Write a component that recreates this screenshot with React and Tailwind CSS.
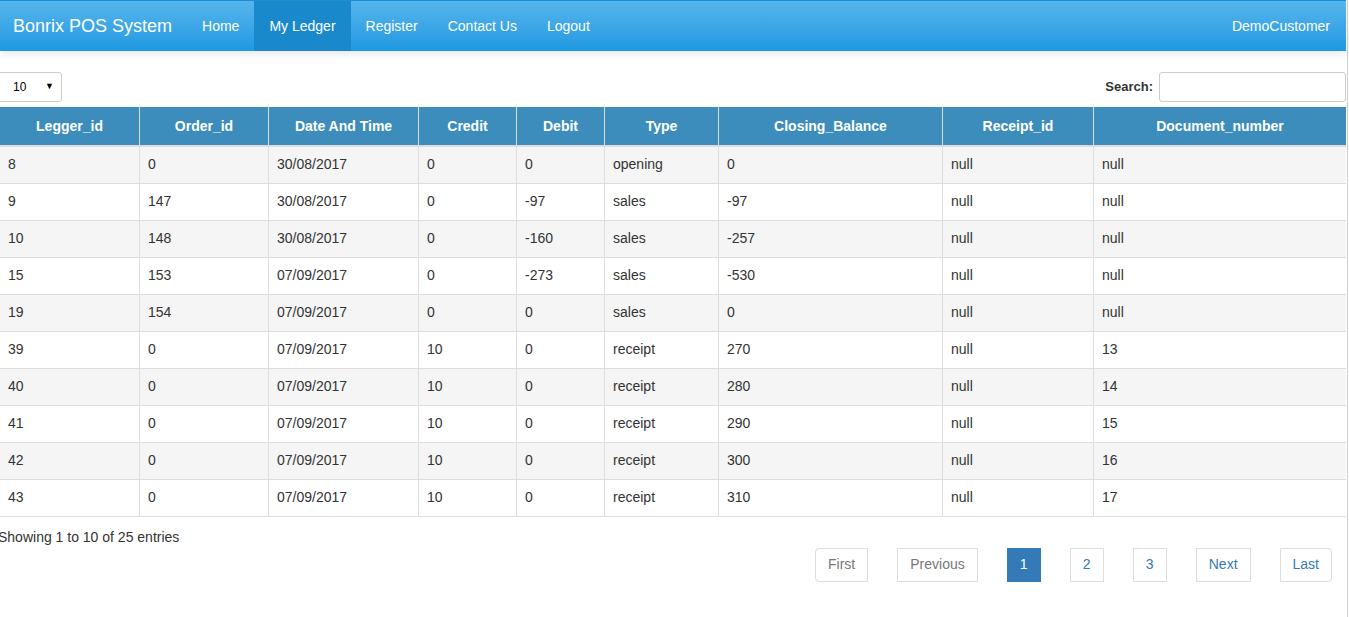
import React from "react";

const cols = [
  { name: "Legger_id", w: 140 },
  { name: "Order_id", w: 129 },
  { name: "Date And Time", w: 150 },
  { name: "Credit", w: 98 },
  { name: "Debit", w: 88 },
  { name: "Type", w: 114 },
  { name: "Closing_Balance", w: 224 },
  { name: "Receipt_id", w: 151 },
  { name: "Document_number", w: 253 },
];

const rows = [
  ["8", "0", "30/08/2017", "0", "0", "opening", "0", "null", "null"],
  ["9", "147", "30/08/2017", "0", "-97", "sales", "-97", "null", "null"],
  ["10", "148", "30/08/2017", "0", "-160", "sales", "-257", "null", "null"],
  ["15", "153", "07/09/2017", "0", "-273", "sales", "-530", "null", "null"],
  ["19", "154", "07/09/2017", "0", "0", "sales", "0", "null", "null"],
  ["39", "0", "07/09/2017", "10", "0", "receipt", "270", "null", "13"],
  ["40", "0", "07/09/2017", "10", "0", "receipt", "280", "null", "14"],
  ["41", "0", "07/09/2017", "10", "0", "receipt", "290", "null", "15"],
  ["42", "0", "07/09/2017", "10", "0", "receipt", "300", "null", "16"],
  ["43", "0", "07/09/2017", "10", "0", "receipt", "310", "null", "17"],
];

export default function App() {
  return (
    <div className="w-[1349px] h-[617px] overflow-hidden flex bg-white font-['Liberation_Sans',Arial,sans-serif] text-[14px] text-[#333]">
      <div className="w-[1346px] shrink-0 flex flex-col">
        {/* Navbar */}
        <div className="relative h-[51px] border-t border-[#1a8fd6] bg-gradient-to-b from-[#55b5ec] to-[#1c99e1] flex items-stretch justify-between shadow-[0_4px_6px_rgba(0,0,0,0.08)]">
          <div className="flex items-stretch">
            <div className="flex items-center pl-[13px] pr-[15px] text-[18px] text-white">Bonrix POS System</div>
            <div className="flex items-center px-[15px] text-white">Home</div>
            <div className="flex items-center px-[15px] text-white bg-[#1a89cc]">My Ledger</div>
            <div className="flex items-center px-[15px] text-white">Register</div>
            <div className="flex items-center px-[15px] text-white">Contact Us</div>
            <div className="flex items-center px-[15px] text-white">Logout</div>
          </div>
          <div className="flex items-center pr-[16px] text-white">DemoCustomer</div>
        </div>

        {/* Controls */}
        <div className="-ml-[2px] w-[1348px] mt-[21px] flex items-center justify-between h-[30px]">
          <div className="w-[64px] h-[30px] border border-[#ccc] rounded-[3px] flex items-center justify-between pl-[14px] pr-[7px] text-[12px] text-black">
            <span>10</span>
            <span className="text-[9px]">▼</span>
          </div>
          <div className="flex items-center gap-[6px]">
            <span className="font-bold text-[13px]">Search:</span>
            <div className="w-[187px] h-[30px] border border-[#ccc] rounded-[3px]"></div>
          </div>
        </div>

        {/* Table */}
        <div className="-ml-[1px] mt-[5px]">
          <table className="border-collapse table-fixed w-[1347px]">
            <colgroup>
              {cols.map((c) => (
                <col key={c.name} style={{ width: c.w }} />
              ))}
            </colgroup>
            <thead>
              <tr className="bg-[#3c8dbc] h-[39px]">
                {cols.map((c) => (
                  <th
                    key={c.name}
                    className="border-x border-[#ddd] border-b-2 border-b-[#ddd] text-white font-bold text-center text-[14px] p-0 pt-[1px] h-[39px]"
                  >
                    {c.name}
                  </th>
                ))}
              </tr>
            </thead>
            <tbody>
              {rows.map((r, i) => (
                <tr key={i} className={i % 2 === 0 ? "bg-[#f5f5f5]" : "bg-white"}>
                  {r.map((v, j) => (
                    <td key={j} className="border border-[#ddd] h-[37px] pl-[8px] py-0 text-left">
                      {v}
                    </td>
                  ))}
                </tr>
              ))}
            </tbody>
          </table>
        </div>

        {/* Footer info */}
        <div className="-ml-[2px] mt-[12px] h-[16px] leading-[16px] whitespace-nowrap">Showing 1 to 10 of 25 entries</div>
        <div className="flex justify-end pr-[14px] mt-[3px] gap-[29px]">
          <div className="h-[34px] px-[12px] flex items-center border border-[#ddd] rounded-l-[4px] text-[#777]">First</div>
          <div className="h-[34px] px-[12px] flex items-center border border-[#ddd] text-[#777]">Previous</div>
          <div className="h-[34px] w-[34px] flex items-center justify-center border border-[#337ab7] bg-[#337ab7] text-white">1</div>
          <div className="h-[34px] w-[34px] flex items-center justify-center border border-[#ddd] text-[#337ab7]">2</div>
          <div className="h-[34px] w-[34px] flex items-center justify-center border border-[#ddd] text-[#337ab7]">3</div>
          <div className="h-[34px] px-[12px] flex items-center border border-[#ddd] text-[#337ab7]">Next</div>
          <div className="h-[34px] px-[12px] flex items-center border border-[#ddd] rounded-r-[4px] text-[#337ab7]">Last</div>
        </div>
      </div>
      <div className="w-[3px] shrink-0 flex justify-center bg-white">
        <div className="w-[1px] h-full bg-[#d0d0d0]"></div>
      </div>
    </div>
  );
}
